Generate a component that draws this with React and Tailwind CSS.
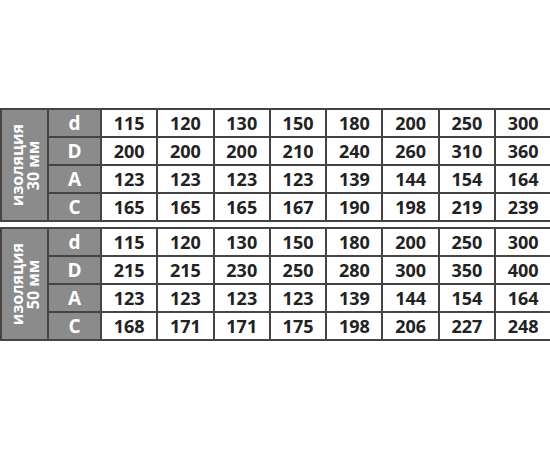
import React from 'react';

const tables = [
  {
    label: '30 мм',
    rows: [
      ['d', [115, 120, 130, 150, 180, 200, 250, 300]],
      ['D', [200, 200, 200, 210, 240, 260, 310, 360]],
      ['A', [123, 123, 123, 123, 139, 144, 154, 164]],
      ['C', [165, 165, 165, 167, 190, 198, 219, 239]],
    ],
  },
  {
    label: '50 мм',
    rows: [
      ['d', [115, 120, 130, 150, 180, 200, 250, 300]],
      ['D', [215, 215, 230, 250, 280, 300, 350, 400]],
      ['A', [123, 123, 123, 123, 139, 144, 154, 164]],
      ['C', [168, 171, 171, 175, 198, 206, 227, 248]],
    ],
  },
];

const SizeTable = ({ label, rows }) => {
  return (
    <div className="grid grid-cols-[45px_51px_repeat(8,54.3px)] grid-rows-[repeat(4,26px)] gap-[2px] p-[2px] bg-[#444444] w-max">
      {/* vertical label */}
      <div className="row-span-4 bg-[#8b8b8b] flex items-center justify-center overflow-hidden">
        <div className="[writing-mode:vertical-rl] rotate-180 whitespace-nowrap text-center text-white font-bold text-[16px] leading-[16px]">
          изоляция
          <br />
          {label}
        </div>
      </div>
      {rows.map(([key, values]) => (
        <React.Fragment key={key}>
          <div className="bg-[#8b8b8b] flex items-center justify-center text-white font-bold text-[19px]">
            {key}
          </div>
          {values.map((v, i) => (
            <div key={i} className="bg-white flex items-center justify-center text-[#222222] font-bold text-[18px]">
              {v}
            </div>
          ))}
        </React.Fragment>
      ))}
    </div>
  );
};

const App = () => {
  return (
    <div className="w-[550px] h-[450px] bg-white overflow-hidden" style={{ fontFamily: '"Open Sans", "Noto Sans", sans-serif' }}>
      <div className="pt-[108px] flex flex-col gap-[5px]">
        {tables.map((t) => (
          <SizeTable key={t.label} label={t.label} rows={t.rows} />
        ))}
      </div>
    </div>
  );
};

export default App;
